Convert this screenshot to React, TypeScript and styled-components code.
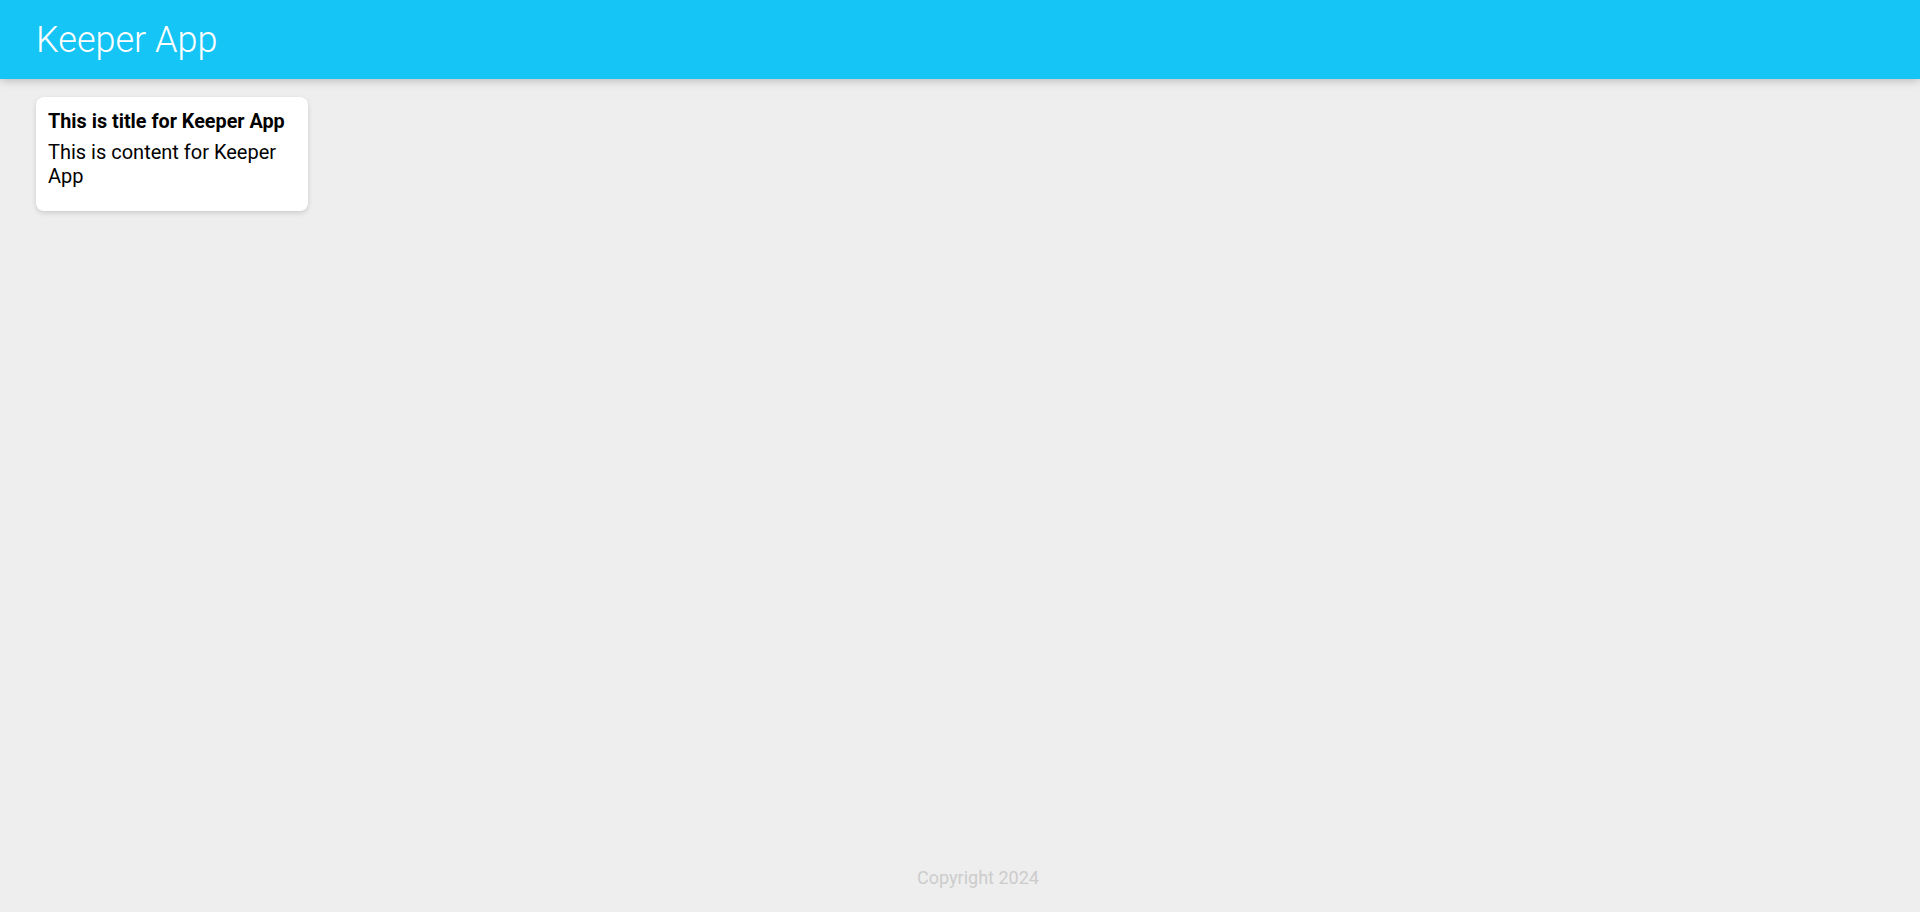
import React from "react";
import styled, { createGlobalStyle } from "styled-components";

const Global = createGlobalStyle`
  * { margin: 0; padding: 0; box-sizing: border-box; }
  html, body { background: #eeeeee; font-family: Roboto, "Noto Sans", sans-serif; font-size: 18px; }
`;

const Page = styled.div`
  min-height: 100vh;
  display: flex;
  flex-direction: column;
`;

const Header = styled.header`
  background: #15c5f5;
  height: 79px;
  padding: 0 36px;
  display: flex;
  align-items: center;
  box-shadow: 0 0 10px 0 rgba(0, 0, 0, 0.3);
  position: relative;
  z-index: 1;
`;

const Title = styled.h1`
  color: #ffffff;
  font-weight: 300;
  font-size: 36px;
  line-height: 1;
`;

const Notes = styled.main`
  flex: 1;
  display: flex;
  flex-wrap: wrap;
  align-items: flex-start;
  gap: 16px;
  padding: 18px 36px;
`;

const Note = styled.div`
  width: 272px;
  background: #ffffff;
  border-radius: 8px;
  box-shadow: 0 2px 5px #cccccc;
  padding: 13px 12px 12px;
`;

const NoteTitle = styled.h2`
  font-size: 1.1em;
  font-weight: 700;
  color: #000;
  margin-bottom: 7px;
`;

const NoteBody = styled.p`
  font-size: 20px;
  color: #000;
  margin-bottom: 11px;
  white-space: pre-wrap;
  word-wrap: break-word;
`;

const Footer = styled.footer`
  padding: 0 0 24px 36px;
  text-align: center;
`;

const FooterText = styled.p`
  color: #cccccc;
  font-size: 18px;
`;

export default function App() {
  return (
    <>
      <Global />
      <Page>
        <Header>
          <Title>Keeper App</Title>
        </Header>
        <Notes>
          <Note>
            <NoteTitle>This is title for Keeper App</NoteTitle>
            <NoteBody>This is content for Keeper App</NoteBody>
          </Note>
        </Notes>
        <Footer>
          <FooterText>Copyright 2024</FooterText>
        </Footer>
      </Page>
    </>
  );
}
